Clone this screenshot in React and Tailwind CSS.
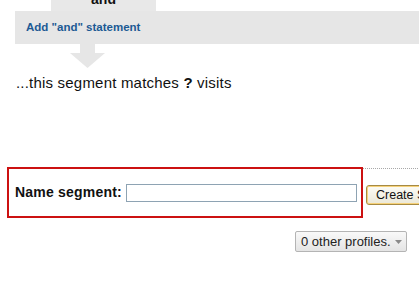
import React from 'react';

const font = { fontFamily: '"Liberation Sans", Arial, sans-serif' };

// Down arrow joining the "and" block to the result line
const JoinArrow = () => (
  <svg width="35" height="24" viewBox="0 0 35 24" className="block ml-[70px]">
    <rect x="10" y="0" width="15" height="10" fill="#e6e6e6" />
    <polygon points="0,9 35,9 17.5,24" fill="#e6e6e6" />
  </svg>
);

export default function App() {
  return (
    <div className="w-[419px] h-[285px] overflow-hidden bg-white text-black" style={font}>
      {/* "and" tab, cut off by the top of the page */}
      <div className="ml-[51px] w-[105px] h-[11px] bg-[#e8e8e8] overflow-hidden">
        <span className="block text-center font-bold text-[14px] leading-[14px] -mt-[8px] text-[#111]">and</span>
      </div>

      {/* Statement bar */}
      <div className="ml-[15px] h-[33px] bg-[#e6e6e6] flex items-center pl-[11px]">
        <a className="font-bold text-[11.5px] text-[#1c5a94] cursor-pointer">Add "and" statement</a>
      </div>

      <JoinArrow />

      <p className="mt-[6px] ml-[16px] text-[15px] leading-[18px] tracking-[0.2px] text-[#111]">
        ...this segment matches <b>?</b> visits
      </p>

      {/* Name row */}
      <div className="mt-[75px] ml-[7px] flex items-start">
        <div className="w-[356px] h-[51px] shrink-0 border-2 border-[#cc1111] flex items-center pl-[6px] gap-[4px]">
          <label className="font-bold text-[14px] tracking-[0.2px] text-[#111] whitespace-nowrap">Name segment:</label>
          <input
            type="text"
            className="w-[231px] h-[18px] border border-[#8ea3b3] bg-white outline-none"
          />
        </div>
        <div className="flex-1 mt-[1px] border-t border-dotted border-[#a8a8a8] pl-[3px] pt-[13px]">
          <button className="w-max shrink-0 h-[20px] pl-[9px] pr-[14px] whitespace-nowrap text-[12.5px] leading-none rounded-[3px] border border-[#a68a44] bg-gradient-to-b from-[#fdfcf6] to-[#ebe8d8] shadow-[inset_0_0_0_1px_#f6d27a] text-[#111]">
            Create Segment
          </button>
        </div>
      </div>

      {/* Profiles dropdown */}
      <div className="mt-[13px] ml-[295px]">
        <button className="w-[112px] h-[21px] flex items-center pl-[5px] pr-[4px] rounded-[2px] border border-[#b4b4b4] bg-gradient-to-b from-[#f9f9f9] to-[#e4e4e4] text-[13px] text-[#222] whitespace-nowrap">
          <span>0 other profiles.</span>
          <svg width="7" height="4" viewBox="0 0 7 4" className="ml-auto">
            <polygon points="0,0 7,0 3.5,4" fill="#8a8a8a" />
          </svg>
        </button>
      </div>
    </div>
  );
}
